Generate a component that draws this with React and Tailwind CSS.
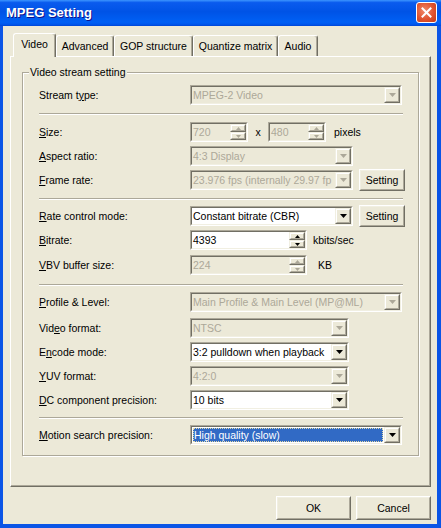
import React from 'react';

// 밑줄 글자 (단축키 표시)
const U = ({ children }) => <span className="underline underline-offset-[1px]">{children}</span>;

// 오목한 3D 테두리 (classic 스타일 입력칸)
function Sunken({ w, white, children }) {
    return (
        <div className={`h-5 shrink-0 ${w} border border-t-[#ACA899] border-l-[#ACA899] border-b-white border-r-white`}>
            <div className={`h-full flex border border-t-[#716F64] border-l-[#716F64] border-b-[#F1EFE2] border-r-[#F1EFE2] ${white ? 'bg-white' : 'bg-[#ECE9D8]'}`}>
                {children}
            </div>
        </div>
    );
}

// 볼록한 버튼 면
function Raised({ className, children }) {
    return (
        <div className={`border border-t-[#F1EFE2] border-l-[#F1EFE2] border-b-[#716F64] border-r-[#716F64] ${className}`}>
            <div className="h-full w-full flex items-center justify-center border border-t-white border-l-white border-b-[#ACA899] border-r-[#ACA899] bg-[#ECE9D8]">
                {children}
            </div>
        </div>
    );
}

function Arrow({ up, disabled, small }) {
    const fill = disabled ? '#ACA899' : '#000';
    if (small) {
        return (
            <svg width="5" height="3" viewBox="0 0 5 3" className="block">
                <path d={up ? 'M0 3h5L2.5 0z' : 'M0 0h5L2.5 3z'} fill={fill} />
            </svg>
        );
    }
    return (
        <svg width="7" height="4" viewBox="0 0 7 4" className="block">
            <path d="M0 0h7L3.5 4z" fill={fill} />
        </svg>
    );
}

function Combo({ w, value, disabled, selected }) {
    return (
        <Sunken w={w} white={!disabled}>
            {selected ? (
                <div className="flex-1 min-w-0 m-[1px] flex items-center bg-[#316AC5] text-white border border-dotted border-[#E2D9A6] whitespace-nowrap overflow-hidden">
                    {value}
                </div>
            ) : (
                <div className={`flex-1 min-w-0 flex items-center pl-[1px] whitespace-nowrap overflow-hidden ${disabled ? 'text-[#ACA899]' : 'text-black'}`}>
                    {value}
                </div>
            )}
            <Raised className="w-4 h-full shrink-0">
                <Arrow disabled={disabled} />
            </Raised>
        </Sunken>
    );
}

function Spin({ w, value, disabled }) {
    return (
        <Sunken w={w} white={!disabled}>
            <div className={`flex-1 min-w-0 flex items-center pl-[1px] ${disabled ? 'text-[#ACA899]' : 'text-black'}`}>
                {value}
            </div>
            <div className="w-4 h-full shrink-0 flex flex-col">
                <Raised className="flex-1">
                    <Arrow up small disabled={disabled} />
                </Raised>
                <Raised className="flex-1">
                    <Arrow small disabled={disabled} />
                </Raised>
            </div>
        </Sunken>
    );
}

function PushButton({ className, children }) {
    return (
        <div className={`border border-t-white border-l-white border-b-[#716F64] border-r-[#716F64] ${className}`}>
            <div className="h-full w-full flex items-center justify-center border border-t-[#F1EFE2] border-l-[#F1EFE2] border-b-[#ACA899] border-r-[#ACA899] bg-[#ECE9D8] text-black">
                {children}
            </div>
        </div>
    );
}

function Row({ label, className = '', children }) {
    return (
        <div className={`flex items-center h-6 ${className}`}>
            <div className="w-[151px] shrink-0 text-black whitespace-nowrap">{label}</div>
            {children}
        </div>
    );
}

const Sep = ({ className }) => (
    <div className={`w-[364px] h-[2px] border-t border-t-[#ACA899] border-b border-b-white ${className}`} />
);

const tabs = [
    { name: 'Advanced', w: 'w-[58px]' },
    { name: 'GOP structure', w: 'w-[79px]' },
    { name: 'Quantize matrix', w: 'w-[85px]' },
    { name: 'Audio', w: 'w-[40px]' },
];

export default function App() {
    return (
        <div className="w-[441px] h-[528px] flex flex-col bg-[#0B55E6] font-['Liberation_Sans',Arial,sans-serif] text-[10.5px] leading-none select-none">
            {/* 타이틀 바 */}
            <div className="h-[26px] shrink-0 flex items-start justify-between pl-[6px] pr-[4px] bg-[linear-gradient(180deg,#3C95FF_0%,#0A5BEE_10%,#0053E6_45%,#0060F5_85%,#0058EE_93%,#0046D6_100%)]">
                <span className="mt-[6px] text-white font-bold text-[13px] [text-shadow:1px_1px_#0F1089]">MPEG Setting</span>
                <div className="mt-[2px] w-[21px] h-[21px] rounded-[3px] border border-white flex items-center justify-center bg-[radial-gradient(circle_at_40%_40%,#F08A6A_0%,#E0532F_55%,#C23A18_100%)]">
                    <svg width="11" height="11" viewBox="0 0 11 11">
                        <path d="M1.5 1.5l8 8M9.5 1.5l-8 8" stroke="#fff" strokeWidth="2" strokeLinecap="square" />
                    </svg>
                </div>
            </div>

            {/* 본문 */}
            <div className="flex-1 ml-[3px] mr-[4px] mb-[4px] bg-[#ECE9D8] flex flex-col pl-[7px] pr-[6px] pt-[7px]">
                {/* 탭 */}
                <div className="h-[23px] flex items-end pl-[3px]">
                    <div className="relative z-10 w-[43px] h-[24px] -mb-[1px] flex items-center justify-center pb-[3px] bg-[#ECE9D8] border-l border-t border-r border-l-white border-t-white border-r-[#716F64] rounded-t-[3px] shadow-[inset_-1px_0_#ACA899] text-black">
                        Video
                    </div>
                    {tabs.map(t => (
                        <div key={t.name} className={`${t.w} h-[21px] flex items-center justify-center bg-[#ECE9D8] border-l border-t border-r border-l-white border-t-white border-r-[#716F64] rounded-t-[3px] shadow-[inset_-1px_0_#ACA899] text-black whitespace-nowrap`}>
                            {t.name}
                        </div>
                    ))}
                </div>

                {/* 탭 패널 */}
                <div className="w-[421px] h-[431px] border border-t-white border-l-white border-b-[#716F64] border-r-[#716F64] shadow-[inset_-1px_-1px_#ACA899]">
                    <div className="relative ml-[11px] mt-[15px] w-[397px] h-[384px] border border-[#ACA899] shadow-[inset_1px_1px_#fff,1px_1px_#fff]">
                        <span className="absolute left-[6px] -top-[6px] px-[1px] bg-[#ECE9D8] text-black">Video stream setting</span>

                        <div className="pl-4 pt-[10px] flex flex-col">
                            <Row label={<>Stream t<U>y</U>pe:</>}>
                                <Combo w="w-[212px]" value="MPEG-2 Video" disabled />
                            </Row>
                            <Sep className="mt-[6px]" />
                            <Row label={<><U>S</U>ize:</>} className="mt-[5px]">
                                <Spin w="w-[58px]" value="720" disabled />
                                <span className="w-[20px] text-center">x</span>
                                <Spin w="w-[58px]" value="480" disabled />
                                <span className="ml-[8px]">pixels</span>
                            </Row>
                            <Row label={<><U>A</U>spect ratio:</>}>
                                <Combo w="w-[163px]" value="4:3 Display" disabled />
                            </Row>
                            <Row label={<><U>F</U>rame rate:</>}>
                                <Combo w="w-[163px]" value="23.976 fps (internally 29.97 fp" disabled />
                                <PushButton className="ml-[6px] w-[46px] h-[22px]">Setting</PushButton>
                            </Row>
                            <Sep className="mt-[6px]" />
                            <Row label={<><U>R</U>ate control mode:</>} className="mt-[4px]">
                                <Combo w="w-[163px]" value="Constant bitrate (CBR)" />
                                <PushButton className="ml-[6px] w-[46px] h-[22px]">Setting</PushButton>
                            </Row>
                            <Row label={<><U>B</U>itrate:</>}>
                                <Spin w="w-[117px]" value="4393" />
                                <span className="ml-[6px]">kbits/sec</span>
                            </Row>
                            <Row label={<><U>V</U>BV buffer size:</>} className="mt-[1px]">
                                <Spin w="w-[117px]" value="224" disabled />
                                <span className="ml-[11px]">KB</span>
                            </Row>
                            <Sep className="mt-[7px]" />
                            <Row label={<><U>P</U>rofile &amp; Level:</>} className="mt-[4px]">
                                <Combo w="w-[212px]" value="Main Profile & Main Level (MP@ML)" disabled />
                            </Row>
                            <Row label={<>Vid<U>e</U>o format:</>} className="mt-[2px]">
                                <Combo w="w-[159px]" value="NTSC" disabled />
                            </Row>
                            <Row label={<>E<U>n</U>code mode:</>}>
                                <Combo w="w-[159px]" value="3:2 pulldown when playback" />
                            </Row>
                            <Row label={<><U>Y</U>UV format:</>}>
                                <Combo w="w-[159px]" value="4:2:0" disabled />
                            </Row>
                            <Row label={<><U>D</U>C component precision:</>}>
                                <Combo w="w-[159px]" value="10 bits" />
                            </Row>
                            <Sep className="mt-[5px]" />
                            <Row label={<><U>M</U>otion search precision:</>} className="mt-[4px]">
                                <Combo w="w-[212px]" value="High quality (slow)" selected />
                            </Row>
                        </div>
                    </div>
                </div>

                {/* 하단 버튼 */}
                <div className="mt-[9px] flex justify-end gap-[5px]">
                    <PushButton className="w-[75px] h-[24px]">OK</PushButton>
                    <PushButton className="w-[75px] h-[24px]">Cancel</PushButton>
                </div>
            </div>
        </div>
    );
}
